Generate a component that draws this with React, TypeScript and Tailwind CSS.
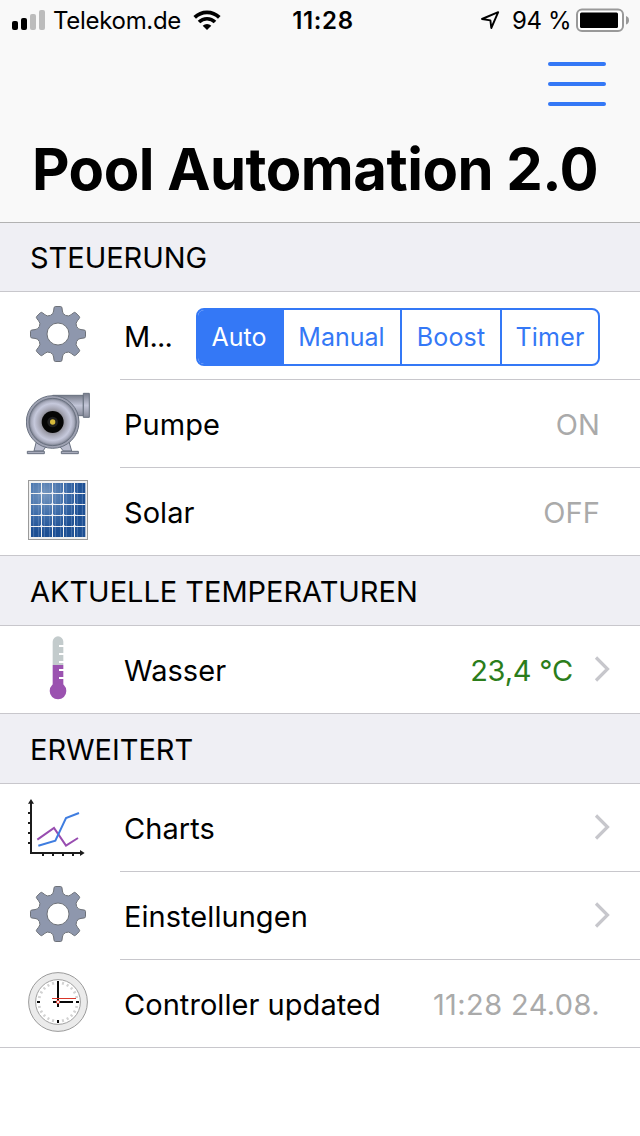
import type { ReactNode } from "react";

const polar = (r: number, deg: number) => {
  const a = (deg * Math.PI) / 180;
  return [r * Math.sin(a), -r * Math.cos(a)];
};

const rotate = (x: number, y: number, deg: number) => {
  const a = (deg * Math.PI) / 180;
  const px = x * Math.cos(a) - y * Math.sin(a);
  const py = x * Math.sin(a) + y * Math.cos(a);
  return `${px.toFixed(2)} ${py.toFixed(2)}`;
};

const gearPath =
  [0, 45, 90, 135, 180, 225, 270, 315]
    .map((d, i) => {
      const p = (x: number, y: number) => rotate(x, y, d);
      return `${i === 0 ? "M" : "L"}${p(-7.6, -18.6)} Q${p(-4.4, -20)} ${p(-4.4, -23)} L${p(-4, -26)} Q${p(-3.8, -27.5)} ${p(-2.6, -27.5)} L${p(2.6, -27.5)} Q${p(3.8, -27.5)} ${p(4, -26)} L${p(4.4, -23)} Q${p(4.4, -20)} ${p(7.6, -18.6)}`;
    })
    .join(" ") + " Z M11 0 A11 11 0 1 0 -11 0 A11 11 0 1 0 11 0 Z";

function Icon({ children }: { children: ReactNode }) {
  return (
    <svg viewBox="26 0 64 87" className="ml-[26px] h-[87px] w-16 shrink-0">
      {children}
    </svg>
  );
}

function Gear() {
  return (
    <Icon>
      <path transform="translate(58 42)" d={gearPath} fill="#8e97ad" stroke="#6d7178" strokeWidth="1" fillRule="evenodd" />
    </Icon>
  );
}

function Pump() {
  return (
    <Icon>
      <defs>
        <radialGradient id="housing">
          <stop offset="0.4" stopColor="#85848c" />
          <stop offset="0.6" stopColor="#aaabba" />
          <stop offset="0.78" stopColor="#c6c9dc" />
          <stop offset="0.9" stopColor="#a9acbd" />
          <stop offset="1" stopColor="#777c8b" />
        </radialGradient>
        <linearGradient id="pipe" x1="0" y1="0" x2="0" y2="1">
          <stop offset="0" stopColor="#787d8b" />
          <stop offset="0.5" stopColor="#c3c6d8" />
          <stop offset="1" stopColor="#868a99" />
        </linearGradient>
      </defs>
      <g transform="translate(15 0) scale(.33333)" stroke="#687080" strokeWidth="3">
        <path d="M64 185 L57 213 H84 L94 198 Z M162 185 L170 213 H145 L133 198 Z" fill="#b9bccd" />
        <path d="M37 214 H88 V221 H37 Z M139 214 H190 V221 H139 Z" fill="#a8abbb" />
        <path d="M113 46 H205 V107 H170 L113 90 Z" fill="url(#pipe)" />
        <path d="M205 40 H223 V112 H205 Z" fill="url(#pipe)" />
        <circle cx="113" cy="126" r="79" fill="#9ea1b1" />
        <circle cx="113" cy="126" r="71" fill="url(#housing)" />
        <circle cx="113" cy="126" r="33" fill="#050505" stroke="none" />
        <circle cx="113" cy="126" r="16" fill="#202020" stroke="none" />
        <circle cx="113" cy="126" r="8" fill="#d6b93b" stroke="none" />
      </g>
    </Icon>
  );
}

const cells = [79, 112, 145, 178];
const nodeRows = [70, 103, 136, 169];

function Solar() {
  return (
    <Icon>
      <defs>
        <radialGradient id="cells" cx="0.25" cy="0.2" r="0.9">
          <stop offset="0" stopColor="#7596be" />
          <stop offset="0.45" stopColor="#3e6da9" />
          <stop offset="0.8" stopColor="#1d4f93" />
        </radialGradient>
      </defs>
      <g transform="translate(15 2) scale(.33333)">
        <rect x="40.5" y="31.5" width="177" height="177" fill="#f0f0f0" stroke="#9a9a9a" strokeWidth="3" />
        <rect x="48" y="39" width="163" height="162" fill="url(#cells)" />
        {[56, 71, 88, 104, 121, 137, 154, 170, 187, 202].map((x) => (
          <path key={x} d={`M${x} 39 V201`} stroke="#7c9cc8" strokeOpacity=".5" strokeWidth="3" />
        ))}
        {cells.map((x) => (
          <path key={x} d={`M${x + 0.5} 39 V201`} stroke="#f3f3f3" strokeWidth="3" />
        ))}
        {nodeRows.map((y) => (
          <path key={y} d={`M48 ${y + 0.5} H211`} stroke="#f3f3f3" strokeWidth="3" />
        ))}
        {cells.flatMap((x) =>
          nodeRows.map((y) => (
            <path key={`${x}-${y}`} d={`M${x} ${y - 7} L${x + 5} ${y} L${x} ${y + 5} L${x - 4} ${y} Z`} fill="#eef1f7" />
          )),
        )}
      </g>
    </Icon>
  );
}

function Thermometer() {
  return (
    <Icon>
      <g transform="translate(15 -1) scale(.33333)">
        <path d="M113 120 V50 A16 16 0 0 1 145 50 V120 Z" fill="#c3cbcc" />
        <path d="M113 120 H145 V180 H113 Z" fill="#9b52b0" />
        <circle cx="129" cy="198" r="25" fill="#9b52b0" />
        {[60, 84, 108, 132, 156].map((y) => (
          <rect key={y} x="132" y={y} width="16" height="6" fill="#fff" />
        ))}
      </g>
    </Icon>
  );
}

function ChartIcon() {
  return (
    <Icon>
      <g transform="translate(15 6) scale(.33333)" fill="none" strokeWidth="6">
        <path d="M67 149 L117 114 L153 167 L189 144" stroke="#984db0" />
        <path d="M70 167 L121 152 L153 84 L192 69" stroke="#3f7de0" />
        <path d="M48 36 V189 H200" stroke="#1c1c1c" />
        <path d="M39 69 H47 M39 99 H47 M39 129 H47 M39 159 H47 M84 188 V198 M114 188 V198 M144 188 V198 M174 188 V198" stroke="#1c1c1c" />
        <path d="M48 27 L57 41 H39 Z M209 189 L195 180 V198 Z" fill="#1c1c1c" />
      </g>
    </Icon>
  );
}

function Clock() {
  return (
    <Icon>
      <g transform="translate(58 42)">
        <circle r="29.4" fill="#ebebeb" stroke="#9b9b9b" strokeWidth="1" />
        <circle r="22.4" fill="#fff" stroke="#a0a0a0" strokeWidth="1" />
        {Array.from({ length: 24 }, (_, i) => i * 15)
          .filter((d) => d % 90 !== 0)
          .map((d) => {
            const [x1, y1] = polar(17.8, d);
            const [x2, y2] = polar(20.6, d);
            return <line key={d} x1={x1} y1={y1} x2={x2} y2={y2} stroke="#d2d2d2" strokeWidth="2" />;
          })}
        <path d="M0 -21 V5 M0 18 V21 M-21 0 H-18 M18 0 H21 M-5 0 H15" stroke="#080808" strokeWidth="2" />
        <circle r="1.6" fill="#fff" stroke="#d3372b" strokeWidth="1" />
        <path d="M-6 -3.5 H18" stroke="#d9362a" strokeWidth="1" />
      </g>
    </Icon>
  );
}

function Chevron() {
  return (
    <svg viewBox="0 0 18 28" className="mr-[29px] mb-[2px] ml-[20px] h-7 w-[18px] shrink-0">
      <path d="M3 2.5 L14.5 14 L3 25.5" fill="none" stroke="#c7c7cc" strokeWidth="3.2" />
    </svg>
  );
}

function Section({ children, first }: { children: ReactNode; first?: boolean }) {
  return (
    <h2 className={`${first ? "h-[69px]" : "h-[70px]"} flex items-center border-b border-[#c8c7cc] bg-[#efeff4] pt-[2px] pl-[30px] text-[29px] tracking-[-0.03px]`}>
      {children}
    </h2>
  );
}

function Row({ icon, label, children, last, tracking = "tracking-[0.05px]" }: { icon: ReactNode; label: string; children?: ReactNode; last?: boolean; tracking?: string }) {
  return (
    <div className={`flex h-[88px] ${last ? "border-b border-[#c8c7cc]" : ""}`}>
      {icon}
      <div className={`ml-[30px] flex min-w-0 flex-1 items-center ${last ? "" : "border-b border-[#c8c7cc]"}`}>
        <span className={`w-0 flex-1 pt-[2px] pl-1 text-[29px] whitespace-nowrap ${tracking}`}>{label}</span>
        {children}
      </div>
    </div>
  );
}

function Value({ children, tracking = "tracking-[0.1px]" }: { children: ReactNode; tracking?: string }) {
  return <span className={`pt-[2px] pr-10 text-[29px] text-[#aaaaaa] ${tracking}`}>{children}</span>;
}

export default function App() {
  return (
    <main className="h-[1136px] w-[640px] overflow-hidden bg-white font-['Inter',sans-serif] text-black">
      <header className="flex h-[223px] flex-col border-b border-[#b2b2b2] bg-[#f9f9f9]">
        <div className="grid h-10 grid-cols-[240px_1fr_240px] items-center text-[24px]">
          <div className="flex items-center">
            <svg viewBox="0 0 34 20" className="ml-3 h-5 w-[34px]">
              <rect x="0" y="11" width="6" height="9" rx="2" />
              <rect x="9" y="8" width="6" height="12" rx="2" />
              <rect x="18" y="4" width="6" height="16" rx="2" fill="#bcbcbc" />
              <rect x="27" y="0" width="6" height="20" rx="2" fill="#bcbcbc" />
            </svg>
            <span className="w-[147px] pt-[2px] pl-[7px] tracking-[-0.3px]">Telekom.de</span>
            <svg viewBox="0 0 28 20" className="h-5 w-7">
              <path d="M1.7 7.4 A17.5 17.5 0 0 1 26.3 7.4" fill="none" stroke="#000" strokeWidth="3.7" />
              <path d="M6 12 A11.3 11.3 0 0 1 22 12" fill="none" stroke="#000" strokeWidth="3.6" />
              <path d="M14 20 L9.7 15.7 A6.1 6.1 0 0 1 18.3 15.7 Z" />
            </svg>
          </div>
          <span className="pt-[2px] pl-[6px] text-center font-semibold tracking-[0.6px]">11:28</span>
          <div className="flex items-center">
            <svg viewBox="0 0 20 20" className="ml-20 h-5 w-5">
              <path d="M18.2 2.2 L11.3 18 L10.4 10.4 L2 9 Z" fill="none" stroke="#000" strokeWidth="1.9" strokeLinejoin="round" />
            </svg>
            <span className="w-[64px] pt-[2px] pl-3 tracking-[-0.4px] whitespace-nowrap">94 %</span>
            <svg viewBox="0 0 54 24" className="ml-3 h-6 w-[54px]">
              <rect x="1" y="1.5" width="46" height="21.5" rx="5" fill="#fff" stroke="#999" strokeWidth="2" />
              <rect x="4" y="4.5" width="38" height="15.5" rx="1.5" />
              <path d="M50 8 Q53 9 53 12.2 Q53 15.5 50 16.5 Z" fill="#999" />
            </svg>
          </div>
        </div>
        <button className="mt-[22px] mr-[34px] flex h-11 w-[58px] flex-col justify-between self-end" aria-label="Menu">
          <span className="h-1 w-full rounded-full bg-[#3478f6]" />
          <span className="h-1 w-full rounded-full bg-[#3478f6]" />
          <span className="h-1 w-full rounded-full bg-[#3478f6]" />
        </button>
        <h1 className="mt-[28px] pl-8 text-[58px] leading-[70px] font-bold tracking-[-0.5px] whitespace-nowrap">Pool Automation 2.0</h1>
      </header>

      <Section first>STEUERUNG</Section>
      <Row icon={<Gear />} label="M..." tracking="tracking-[-0.8px]">
        <div className="mt-[2px] mr-10 flex h-[58px] w-[404px] shrink-0 divide-x-2 divide-[#3478f6] overflow-hidden rounded-lg border-2 border-[#3478f6] text-[25px] text-[#3478f6]">
          <span className="flex w-[86px] items-center justify-center bg-[#3478f6] pt-[2px] pr-[2px] text-white">Auto</span>
          <span className="flex w-[118px] items-center justify-center pt-[2px] pr-[1px]">Manual</span>
          <span className="flex w-[100px] items-center justify-center pt-[2px] tracking-[0.2px]">Boost</span>
          <span className="flex flex-1 items-center justify-center pt-[2px] tracking-[0.2px]">Timer</span>
        </div>
      </Row>
      <Row icon={<Pump />} label="Pumpe">
        <Value>ON</Value>
      </Row>
      <Row icon={<Solar />} label="Solar" last>
        <Value>OFF</Value>
      </Row>

      <Section>AKTUELLE TEMPERATUREN</Section>
      <Row icon={<Thermometer />} label="Wasser" last>
        <span className="pt-[2px] text-[29px] tracking-[-0.2px] text-[#2b7d1b]">23,4 °C</span>
        <Chevron />
      </Row>

      <Section>ERWEITERT</Section>
      <Row icon={<ChartIcon />} label="Charts">
        <Chevron />
      </Row>
      <Row icon={<Gear />} label="Einstellungen">
        <Chevron />
      </Row>
      <Row icon={<Clock />} label="Controller updated" last>
        <Value tracking="tracking-[0.4px]">11:28 24.08.</Value>
      </Row>
    </main>
  );
}
